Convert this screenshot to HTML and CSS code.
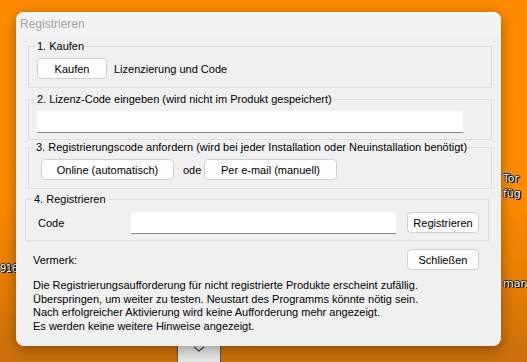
FILE: index.html
```html
<!DOCTYPE html>
<html>
<head>
<meta charset="utf-8">
<link rel="stylesheet" href="styles.css">
</head>
<body>
<div class="desk">
  <span class="lbl l916">916</span>
  <span class="lbl ltor">Tor<br>füg</span>
  <span class="lbl lman">man</span>
  <div class="tab">
    <svg width="12" height="6" viewBox="0 0 12 6"><path d="M1 1 L6 5 L11 1" fill="none" stroke="#444" stroke-width="1.2"/></svg>
  </div>
  <div class="dialog">
    <div class="titlebar">Registrieren</div>
    <div class="content">
      <fieldset class="group g1">
        <legend>1. Kaufen</legend>
        <div class="row">
          <button class="btn b-kaufen">Kaufen</button>
          <span class="txt">Lizenzierung und Code</span>
        </div>
      </fieldset>
      <fieldset class="group g2">
        <legend>2. Lizenz-Code eingeben (wird nicht im Produkt gespeichert)</legend>
        <div class="field f-lic"></div>
      </fieldset>
      <fieldset class="group g3">
        <legend>3. Registrierungscode anfordern (wird bei jeder Installation oder Neuinstallation benötigt)</legend>
        <div class="row">
          <button class="btn b-online">Online (automatisch)</button>
          <span class="ode">ode</span>
          <button class="btn b-mail">Per e-mail (manuell)</button>
        </div>
      </fieldset>
      <fieldset class="group g4">
        <legend>4. Registrieren</legend>
        <div class="row">
          <span class="code-lbl">Code</span>
          <div class="field f-code"></div>
          <button class="btn b-reg">Registrieren</button>
        </div>
      </fieldset>
      <div class="row vrow">
        <span class="vermerk">Vermerk:</span>
        <button class="btn b-close">Schließen</button>
      </div>
      <div class="notes">
        <div>Die Registrierungsaufforderung für nicht registrierte Produkte erscheint zufällig.</div>
        <div>Überspringen, um weiter zu testen. Neustart des Programms könnte nötig sein.</div>
        <div>Nach erfolgreicher Aktivierung wird keine Aufforderung mehr angezeigt.</div>
        <div>Es werden keine weitere Hinweise angezeigt.</div>
      </div>
    </div>
  </div>
</div>
</body>
</html>
```
FILE: styles.css
```css
* { box-sizing: border-box; }
html, body { margin: 0; padding: 0; }
body {
  width: 527px;
  height: 362px;
  overflow: hidden;
  font-family: "Liberation Sans", Arial, sans-serif;
  font-size: 11px;
  color: #000;
}
.desk {
  position: relative;
  width: 527px;
  height: 362px;
  background: linear-gradient(to bottom, #ff8c00 0%, #fd8a00 55%, #e27c04 80%, #c96f0c 100%);
}
.lbl {
  position: absolute;
  color: #fff;
  font-family: "DejaVu Sans", sans-serif;
  font-size: 11px;
  line-height: 15px;
  text-shadow: 1px 1px 0 #000, -1px 0 0 #222, 0 -1px 0 #222, 1px 0 0 #000;
}
.l916 { left: 0; top: 261px; font-size: 10px; letter-spacing: -0.5px; }
.ltor { left: 503px; top: 171px; }
.lman { left: 503px; top: 276px; }
.tab {
  position: absolute;
  left: 177px;
  top: 340px;
  width: 44px;
  height: 30px;
  background: #e4e4e4;
  border-left: 1px solid #555;
  border-right: 1px solid #555;
  display: flex;
  justify-content: center;
  padding-top: 6px;
}
.dialog {
  position: absolute;
  left: 16px;
  top: 12px;
  width: 485px;
  height: 334px;
  background: #f0f0f0;
  border-radius: 8px;
  box-shadow: 0 3px 14px rgba(0,0,0,0.35);
  overflow: hidden;
}
.titlebar {
  height: 24px;
  background: #f3f3f3;
  color: #a2a2a2;
  font-size: 12px;
  line-height: 24px;
  padding-left: 4px;
}
.content {
  display: flex;
  flex-direction: column;
}
.group {
  margin: 0 0 0 12px;
  width: 464px;
  border: 1px solid #dcdcdc;
  padding: 0 8px;
  min-width: 0;
}
.group legend {
  padding: 0 2px;
  margin-left: -2px;
  line-height: 14px;
  font-size: 11px;
  white-space: nowrap;
}
.g1 { margin-top: 3px; padding-top: 5px; padding-bottom: 8px; }
.g2 { margin-top: 4px; padding-top: 5px; padding-bottom: 6px; }
.g3 { margin-top: 0; padding-top: 5px; padding-bottom: 8px; }
.g3 legend { margin-left: -3px; }
.g4 { margin-left: 9px; margin-top: 3px; padding-top: 6px; padding-bottom: 6px; }
.g4 legend { margin-left: -2px; }
.row {
  display: flex;
  align-items: center;
}
.btn {
  font-family: inherit;
  font-size: 11px;
  height: 21px;
  background: #fdfdfd;
  border: 1px solid #d0d0d0;
  border-radius: 4px;
  padding: 0;
  color: #000;
}
.b-kaufen { width: 70px; }
.txt { margin-left: 7px; }
.field {
  height: 22px;
  background: #fff;
  border-bottom: 1px solid #8a8a8a;
}
.f-lic { width: 426px; }
.b-online { width: 133px; margin-left: 4px; }
.ode { margin-left: 9px; width: 21px; overflow: hidden; white-space: nowrap; }
.b-mail { width: 133px; margin-left: 0; }
.code-lbl { margin-left: 4px; width: 93px; }
.f-code { width: 265px; }
.b-reg { width: 72px; margin-left: 11px; height: 21px; margin-top: -1px; }
.vrow {
  margin-top: 8px;
  padding-left: 17px;
  justify-content: space-between;
  padding-right: 22px;
}
.vermerk { margin-top: 0; }
.b-close { width: 72px; }
.notes {
  margin-top: 9px;
  padding-left: 17px;
  line-height: 13.5px;
}
```
